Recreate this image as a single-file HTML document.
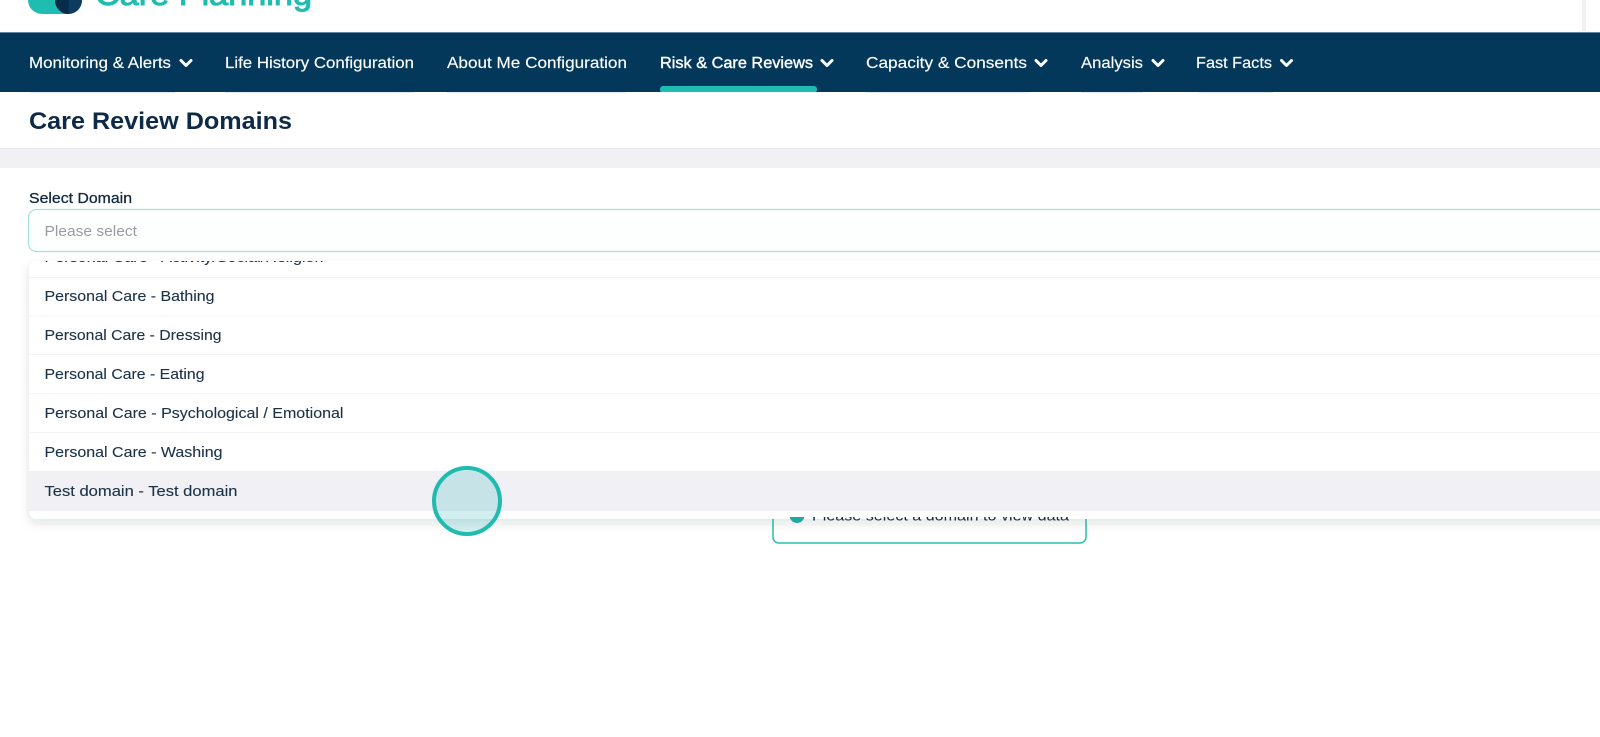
<!DOCTYPE html>
<html lang="en">
<head>
<meta charset="utf-8">
<title>Care Review Domains</title>
<style>
html,body{margin:0;padding:0;background:#fff;width:1600px;height:737px;overflow:hidden}
svg{display:block}
text{font-family:"Liberation Sans",sans-serif}
.nav{fill:#fff;font-size:16px;stroke:#fff;stroke-width:.15}
.opt{fill:#1c3347;font-size:15px;stroke:#1c3347;stroke-width:.12}
.chev{fill:none;stroke:#fff;stroke-width:3;stroke-linecap:round;stroke-linejoin:round}
</style>
</head>
<body>
<svg width="1600" height="737" viewBox="0 0 1600 737" xmlns="http://www.w3.org/2000/svg">
<defs>
<filter id="sh" x="-5%" y="-10%" width="110%" height="125%"><feDropShadow dx="0" dy="4" stdDeviation="5" flood-color="#1c2a3a" flood-opacity=".13"/></filter>
<clipPath id="dd"><rect x="29" y="261" width="1580" height="258"/></clipPath>
<clipPath id="al"><rect x="770" y="517" width="330" height="30"/></clipPath>
</defs>

<!-- top header -->
<rect width="1600" height="737" fill="#fff"/>
<path d="M28 -10H68V14H42A14 14 0 0 1 28 0Z" fill="#1fbcb1"/>
<circle cx="68.500" cy="0.500" r="13.500" fill="#0d3c60"/>
<path d="M68.500 -13A13.500 13.500 0 0 0 68.500 14Z" fill="#052c4a"/>
<text x="95" y="5" font-size="32" fill="#1fbcb1" stroke="#1fbcb1" stroke-width="1" textLength="217" lengthAdjust="spacingAndGlyphs">Care Planning</text>
<rect x="1582" y="0" width="4" height="31" fill="#f1f1f4"/>

<!-- nav -->
<rect x="0" y="32" width="1600" height="60" fill="#03385b"/>
<rect x="0" y="32" width="1600" height="1" fill="#5f83a0"/>
<g fill="#e4ebf0">
<rect x="29" y="92" width="146" height="1"/><rect x="225" y="92" width="189" height="1"/><rect x="447" y="92" width="180" height="1"/>
<rect x="866" y="92" width="163" height="1"/><rect x="1081" y="92" width="62" height="1"/><rect x="1197" y="92" width="76" height="1"/>
</g>
<text class="nav" x="29" y="68" textLength="142" lengthAdjust="spacingAndGlyphs">Monitoring &amp; Alerts</text>
<path class="chev" d="M181 60.500L186 65.500L191 60.500"/>
<text class="nav" x="225" y="68" textLength="189" lengthAdjust="spacingAndGlyphs">Life History Configuration</text>
<text class="nav" x="447" y="68" textLength="180" lengthAdjust="spacingAndGlyphs">About Me Configuration</text>
<text class="nav" x="660" y="68" textLength="153" lengthAdjust="spacingAndGlyphs" style="stroke-width:.4">Risk &amp; Care Reviews</text>
<path class="chev" d="M822 60.500L827 65.500L832 60.500"/>
<rect x="660" y="86" width="157" height="7" rx="3" fill="#1fbcb1"/>
<rect x="655" y="92" width="170" height="1" fill="#fff"/>
<text class="nav" x="866" y="68" textLength="161" lengthAdjust="spacingAndGlyphs">Capacity &amp; Consents</text>
<path class="chev" d="M1036 60.500L1041 65.500L1046 60.500"/>
<text class="nav" x="1081" y="68" textLength="62" lengthAdjust="spacingAndGlyphs">Analysis</text>
<path class="chev" d="M1153 60.500L1158 65.500L1163 60.500"/>
<text class="nav" x="1196" y="68" textLength="76" lengthAdjust="spacingAndGlyphs">Fast Facts</text>
<path class="chev" d="M1281.500 60.500L1286.500 65.500L1291.500 60.500"/>

<!-- title -->
<text x="29" y="129" font-size="24" font-weight="700" fill="#0f2a47" textLength="263" lengthAdjust="spacingAndGlyphs">Care Review Domains</text>
<rect x="0" y="148" width="1600" height="20" fill="#f0f0f5"/>
<rect x="0" y="148" width="1600" height="1" fill="#e6e6ec"/>

<!-- select -->
<text x="29" y="203" font-size="15" fill="#14293f" stroke="#14293f" stroke-width=".3" textLength="103" lengthAdjust="spacingAndGlyphs">Select Domain</text>
<rect x="28.500" y="209.500" width="1600" height="42" rx="8" fill="#fdfefe" stroke="#a6e1dd" stroke-width="1.200"/>
<text x="44.500" y="236" font-size="15" fill="#9b9ba6" textLength="92.500" lengthAdjust="spacingAndGlyphs">Please select</text>

<!-- alert behind dropdown -->
<rect x="773" y="480" width="313" height="63" rx="6" fill="#fff" stroke="#2abfb4" stroke-width="1.500"/>

<!-- dropdown -->
<rect x="29" y="261" width="1600" height="258" rx="8" fill="#fff" filter="url(#sh)"/>
<g clip-path="url(#dd)">
<text class="opt" x="44.500" y="262" textLength="279" lengthAdjust="spacingAndGlyphs">Personal Care - Activity/Social/Religion</text>
<rect x="29" y="277" width="1571" height="1" fill="#f3f3f6"/>
<rect x="29" y="315.500" width="1571" height="1" fill="#f3f3f6"/>
<rect x="29" y="354" width="1571" height="1" fill="#f3f3f6"/>
<rect x="29" y="393" width="1571" height="1" fill="#f3f3f6"/>
<rect x="29" y="432" width="1571" height="1" fill="#f3f3f6"/>
<rect x="29" y="471" width="1571" height="40" fill="#f0f0f5"/>
<text class="opt" x="44.500" y="301" textLength="170" lengthAdjust="spacingAndGlyphs">Personal Care - Bathing</text>
<text class="opt" x="44.500" y="340" textLength="177" lengthAdjust="spacingAndGlyphs">Personal Care - Dressing</text>
<text class="opt" x="44.500" y="379" textLength="160" lengthAdjust="spacingAndGlyphs">Personal Care - Eating</text>
<text class="opt" x="44.500" y="418" textLength="299" lengthAdjust="spacingAndGlyphs">Personal Care - Psychological / Emotional</text>
<text class="opt" x="44.500" y="457" textLength="178" lengthAdjust="spacingAndGlyphs">Personal Care - Washing</text>
<text class="opt" x="44.500" y="496" textLength="193" lengthAdjust="spacingAndGlyphs">Test domain - Test domain</text>
</g>

<!-- visible sliver of alert -->
<g clip-path="url(#al)">
<circle cx="797" cy="515.500" r="7.500" fill="#1fa89f"/>
<text x="812" y="520.700" font-size="15" fill="#222b33" textLength="257" lengthAdjust="spacingAndGlyphs">Please select a domain to view data</text>
</g>

<!-- click marker -->
<circle cx="467" cy="501" r="33" fill="#1fb0b4" fill-opacity=".2" stroke="#1fbbb0" stroke-width="4"/>
</svg>
</body>
</html>
